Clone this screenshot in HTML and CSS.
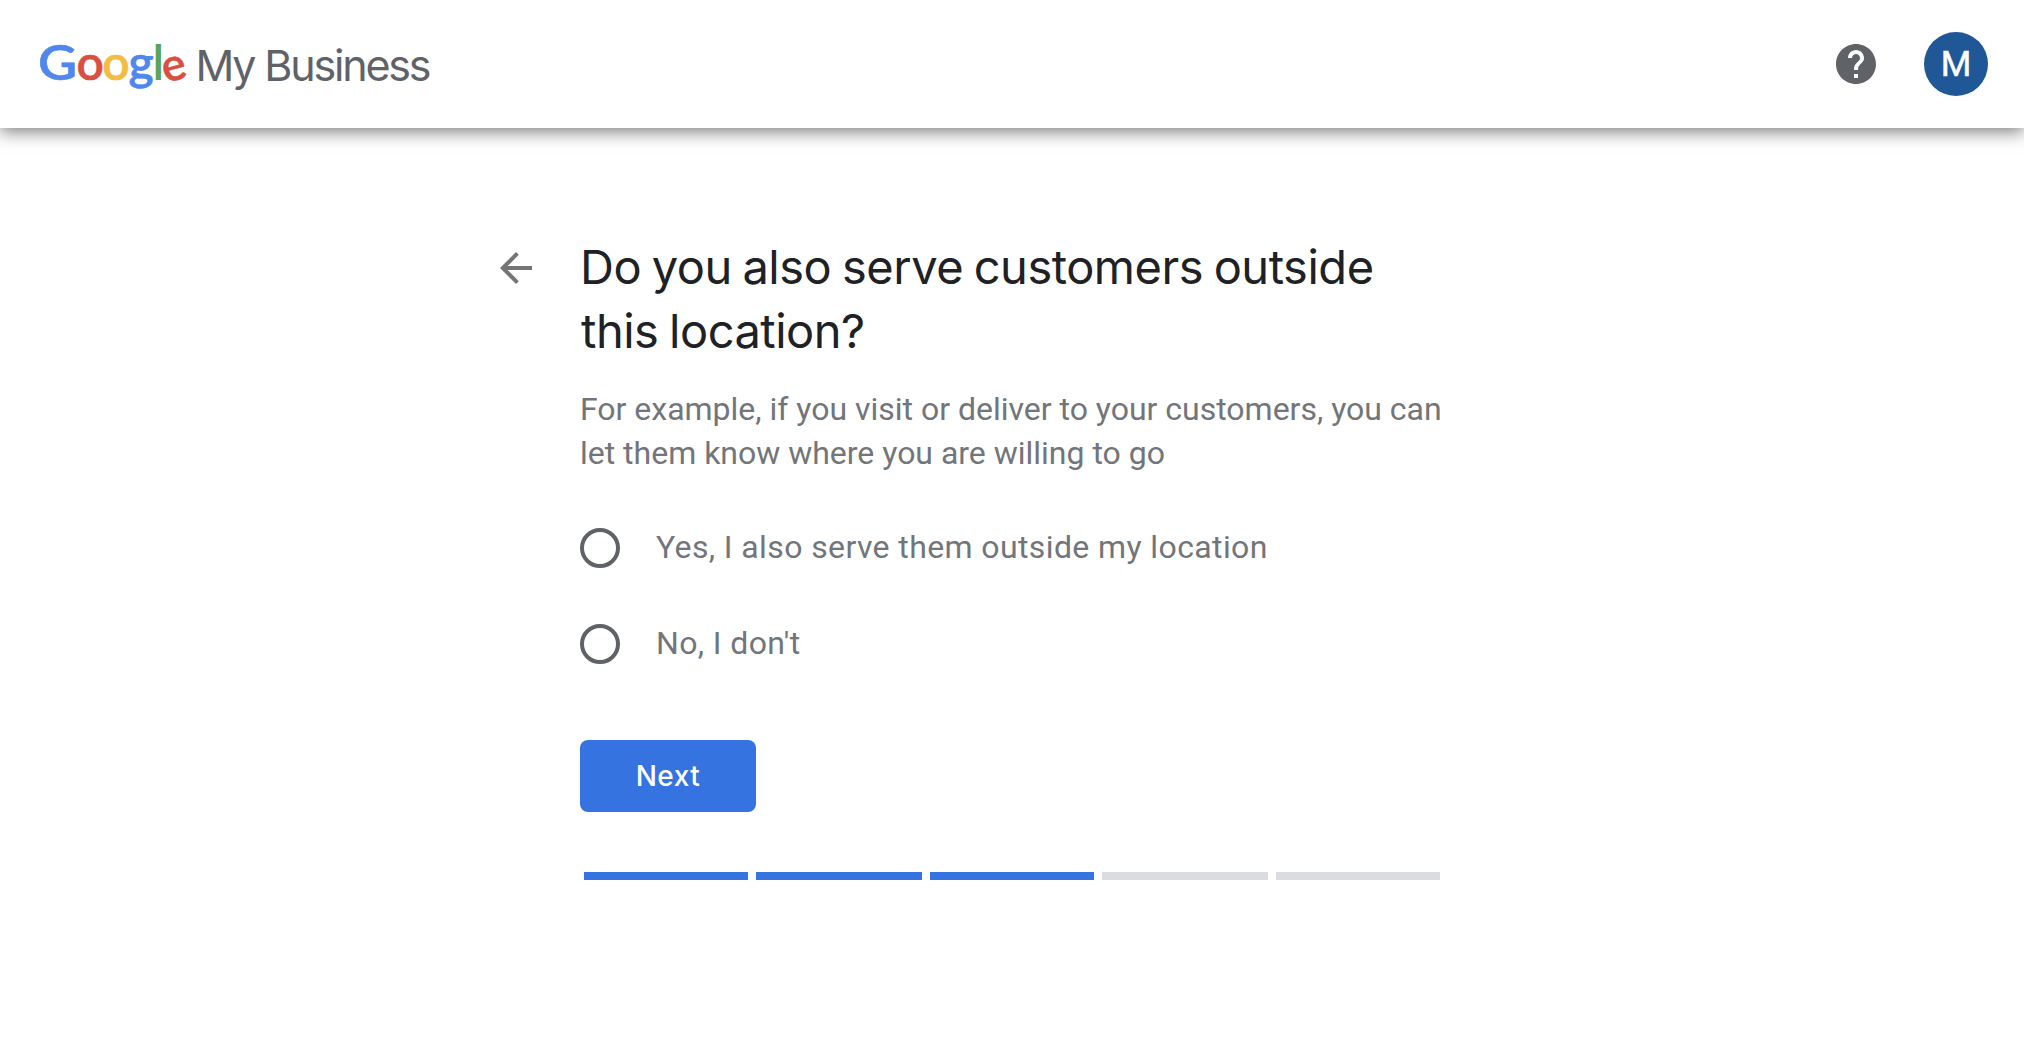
FILE: index.html
```html
<!DOCTYPE html>
<html lang="en">
<head>
  <meta charset="UTF-8">
  <meta name="viewport" content="width=device-width, initial-scale=1.0">
  <title>Google My Business</title>
  <link rel="stylesheet" href="styles.css">
</head>
<body>
  <header class="topbar">
    <svg class="logo" width="400" height="64" viewBox="0 0 400 64" role="img" aria-label="Google My Business">
      <g class="logo-google">
        <text class="blue" transform="translate(-2 48) scale(1.12 1.02)" x="0" y="0">G</text>
        <text class="red" x="36.5" y="48">o</text>
        <text class="yellow" x="62.3" y="48">o</text>
        <text class="blue" x="88.5" y="48">g</text>
        <text class="green" x="112.4" y="48">l</text>
        <text class="red" transform="translate(125.5 51) rotate(-15) scale(0.94)" x="0" y="0">e</text>
      </g>
      <text class="logo-product" x="155.5" y="48.8" textLength="236">My Business</text>
    </svg>
    <div class="actions">
      <svg class="help" width="48" height="48" viewBox="0 0 24 24">
        <path d="M12 2C6.48 2 2 6.48 2 12s4.48 10 10 10 10-4.48 10-10S17.52 2 12 2zm1 17h-2v-2h2v2zm2.07-7.75l-.9.92C13.45 12.9 13 13.5 13 15h-2v-.5c0-1.1.45-2.1 1.17-2.83l1.24-1.26c.37-.36.59-.86.59-1.41 0-1.1-.9-2-2-2s-2 .9-2 2H8c0-2.21 1.79-4 4-4s4 1.79 4 4c0 .88-.36 1.68-.93 2.25z"/>
      </svg>
      <div class="avatar">M</div>
    </div>
  </header>

  <main class="container">
    <button class="back" type="button" aria-label="Back">
      <svg width="48" height="48" viewBox="0 0 24 24">
        <path d="M20 11H7.83l5.59-5.59L12 4l-8 8 8 8 1.41-1.41L7.83 13H20v-2z"/>
      </svg>
    </button>
    <form class="step">
      <h1><span class="line-1">Do you also serve customers outside</span><br><span class="line-2">this location?</span></h1>
      <p class="hint">For example, if you visit or deliver to your customers, you can<br>let them know where you are willing to go</p>

      <label class="option">
        <input type="radio" name="outside">
        <span>Yes, I also serve them outside my location</span>
      </label>
      <label class="option">
        <input type="radio" name="outside">
        <span>No, I don't</span>
      </label>

      <button class="next" type="button">Next</button>

      <div class="progress">
        <div class="bar done"></div>
        <div class="bar done"></div>
        <div class="bar done"></div>
        <div class="bar"></div>
        <div class="bar"></div>
      </div>
    </form>
  </main>
</body>
</html>
```
FILE: styles.css
```css
* {
  box-sizing: border-box;
}

body {
  margin: 0;
  background-color: #fff;
  font-family: Roboto, "Liberation Sans", sans-serif;
  color: #202124;
}

/* Header */
.topbar {
  height: 128px;
  padding: 0 36px 0 40px;
  display: flex;
  align-items: center;
  justify-content: space-between;
  background-color: #fff;
  box-shadow: 0 4px 16px rgba(0, 0, 0, 0.5);
  clip-path: inset(0 0 -30px 0);
}

.logo {
  overflow: visible;
}

.logo-google {
  font-family: Lato, sans-serif;
  font-size: 48px;
  font-weight: 600;
}

.logo-google .blue { stroke: #4f87ed; stroke-width: 0.6px; }
.logo-google .red { stroke: #d95040; stroke-width: 0.6px; }
.logo-google .yellow { stroke: #f2bd42; stroke-width: 0.6px; }

.logo-product {
  font-family: Inter, sans-serif;
  font-size: 43px;
  fill: #5f6368;
}

.blue { fill: #4f87ed; }
.red { fill: #d95040; }
.yellow { fill: #f2bd42; }
.green { fill: #58a55c; }

.actions {
  display: flex;
  align-items: center;
  gap: 44px;
}

.help {
  fill: #5f6368;
}

.avatar {
  width: 64px;
  height: 64px;
  border-radius: 50%;
  background-color: #205796;
  color: #fff;
  font-size: 35px;
  font-weight: 400;
  line-height: 66px;
  text-align: center;
  -webkit-text-stroke: 0.5px #fff;
}

/* Content */
.container {
  width: 1024px;
  margin: 0 auto;
  padding: 107px 80px 0;
  position: relative;
}

.back {
  position: absolute;
  left: -8px;
  top: 116px;
  padding: 0;
  border: 0;
  background: none;
  cursor: pointer;
}

.back svg {
  display: block;
  fill: #757575;
}

h1 {
  margin: 0;
  font-family: Inter, sans-serif;
  font-size: 47px;
  font-weight: 400;
  line-height: 64px;
  white-space: nowrap;
}

.line-1 {
  letter-spacing: -0.48px;
  word-spacing: -2.1px;
}

.line-2 {
  margin-left: 1px;
  letter-spacing: -0.5px;
  word-spacing: -2px;
}

.hint {
  margin: 24px 0 0;
  color: #72757a;
  font-size: 32px;
  line-height: 44px;
  letter-spacing: -0.01px;
  white-space: nowrap;
}

.option {
  display: flex;
  align-items: center;
  height: 96px;
  color: #72757a;
  font-size: 32px;
  letter-spacing: 0.39px;
}

.option span {
  padding-bottom: 2px;
}

.hint + .option {
  margin-top: 25px;
}

.option input {
  appearance: none;
  width: 40px;
  height: 40px;
  margin: 0 36px 0 0;
  border: 4px solid #5f6368;
  border-radius: 50%;
}

.option input:checked {
  border: 12px solid #3574e0;
}

.next {
  display: block;
  width: 176px;
  height: 72px;
  margin-top: 48px;
  padding: 0;
  border: 0;
  border-radius: 8px;
  background-color: #3574e0;
  color: #fff;
  font-family: Inter, sans-serif;
  font-size: 28px;
  font-weight: 500;
  letter-spacing: 0.5px;
  cursor: pointer;
}

.progress {
  display: grid;
  grid-template-columns: 164px 166px 164px 166px 164px;
  gap: 8px;
  margin: 60px 4px 0;
}

.bar {
  height: 8px;
  background-color: #dadce0;
}

.bar.done {
  background-color: #3574e0;
}
```
